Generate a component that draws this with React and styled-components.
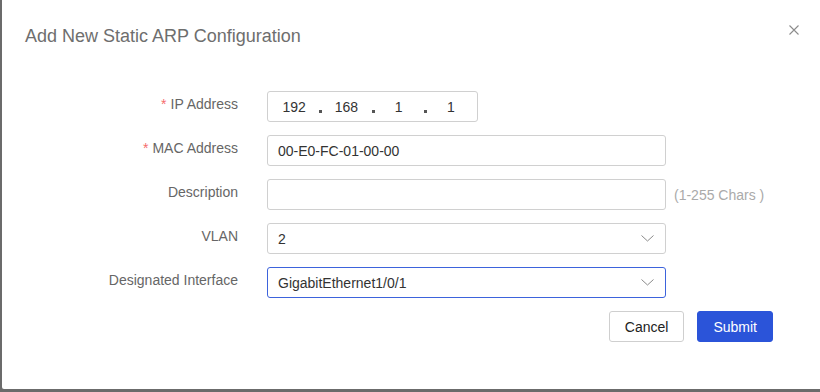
import React from "react";
import styled, { createGlobalStyle } from "styled-components";

const GlobalStyle = createGlobalStyle`
  html, body {
    margin: 0;
    padding: 0;
    background: #6b6b6b;
  }
  body {
    font-family: "Liberation Sans", Arial, sans-serif;
    width: 820px;
    height: 392px;
    overflow: hidden;
  }
`;

const rows = [
  { label: "IP Address", required: true, kind: "ip" },
  { label: "MAC Address", required: true, kind: "text", value: "00-E0-FC-01-00-00" },
  { label: "Description", kind: "text", value: "", hint: "(1-255 Chars )" },
  { label: "VLAN", kind: "select", value: "2" },
  { label: "Designated Interface", kind: "select", value: "GigabitEthernet1/0/1", focused: true },
];

const App = () => {
  return (
    <>
      <GlobalStyle />
      <Dialog>
        <Header>
          <Title>Add New Static ARP Configuration</Title>
          <Close>
            <svg width="10" height="10" viewBox="0 0 10 10">
              <path d="M0.5 0.5 L9.5 9.5 M9.5 0.5 L0.5 9.5" stroke="#8c8c8c" strokeWidth="1.1" />
            </svg>
          </Close>
        </Header>
        <Form>
          {rows.map((row) => (
            <React.Fragment key={row.label}>
              <Label>
                {row.required && <Star>*</Star>}
                {row.label}
              </Label>
              <Field>
                {row.kind === "ip" && (
                  <IpBox>
                    {["192", "168", "1", "1"].map((part, i) => (
                      <IpPart key={i}>
                        {part}
                        {i < 3 && <Dot />}
                      </IpPart>
                    ))}
                  </IpBox>
                )}
                {row.kind === "text" && <TextBox>{row.value}</TextBox>}
                {row.kind === "select" && (
                  <TextBox $focused={row.focused}>
                    <span>{row.value}</span>
                    <svg width="13" height="7" viewBox="0 0 13 7">
                      <path d="M0.5 0.5 L6.5 6 L12.5 0.5" fill="none" stroke="#8a8a8a" strokeWidth="1" />
                    </svg>
                  </TextBox>
                )}
                {row.hint && <Hint>{row.hint}</Hint>}
              </Field>
            </React.Fragment>
          ))}
        </Form>
        <Footer>
          <Button>Cancel</Button>
          <Button $primary>Submit</Button>
        </Footer>
      </Dialog>
    </>
  );
};

const Dialog = styled.div`
  margin-left: 2px;
  width: 818px;
  height: 389px;
  background: #fff;
  border-bottom-left-radius: 2px;
  display: flex;
  flex-direction: column;
`;

const Header = styled.div`
  display: flex;
  justify-content: space-between;
  align-items: flex-start;
  padding: 24px 21px 0 23px;
  height: 91px;
  box-sizing: border-box;
`;

const Title = styled.div`
  font-size: 18px;
  line-height: 24px;
  color: #6e6e6e;
`;

const Close = styled.div`
  display: flex;
  margin-top: 1px;
  cursor: pointer;
`;

const Form = styled.div`
  display: grid;
  grid-template-columns: 236px auto;
  column-gap: 29px;
  row-gap: 13px;
  grid-auto-rows: 31px;
`;

const Label = styled.div`
  text-align: right;
  font-size: 14px;
  line-height: 18px;
  padding-top: 4px;
  color: #666;
  white-space: nowrap;
`;

const Star = styled.span`
  color: #f56c6c;
  margin-right: 4px;
`;

const Field = styled.div`
  display: flex;
  align-items: center;
  gap: 8px;
`;

const TextBox = styled.div`
  box-sizing: border-box;
  width: 399px;
  height: 31px;
  border: 1px solid ${(p) => (p.$focused ? "#3d63dc" : "#d0d0d0")};
  border-radius: 3px;
  padding: 0 11px 0 10px;
  display: flex;
  align-items: center;
  justify-content: space-between;
  font-size: 14px;
  color: #333;
`;

const IpBox = styled.div`
  box-sizing: border-box;
  width: 211px;
  height: 31px;
  border: 1px solid #d0d0d0;
  border-radius: 3px;
  display: grid;
  grid-template-columns: repeat(4, 1fr);
  font-size: 14px;
  color: #333;
`;

const IpPart = styled.div`
  position: relative;
  display: flex;
  align-items: center;
  justify-content: center;
`;

const Dot = styled.span`
  position: absolute;
  right: -2px;
  top: 18px;
  width: 3px;
  height: 3px;
  background: #555;
`;

const Hint = styled.span`
  font-size: 14px;
  color: #aaa;
`;

const Footer = styled.div`
  display: flex;
  justify-content: flex-end;
  gap: 13px;
  padding: 13px 47px 0 0;
`;

const Button = styled.button`
  box-sizing: border-box;
  height: 31px;
  min-width: 74px;
  padding: 0 15px;
  border-radius: 3px;
  font-family: "Liberation Sans", Arial, sans-serif;
  font-size: 14px;
  cursor: pointer;
  border: 1px solid ${(p) => (p.$primary ? "#2b54d9" : "#cfcfcf")};
  background: ${(p) => (p.$primary ? "#2b54d9" : "#fff")};
  color: ${(p) => (p.$primary ? "#fff" : "#222")};
`;

export default App;
